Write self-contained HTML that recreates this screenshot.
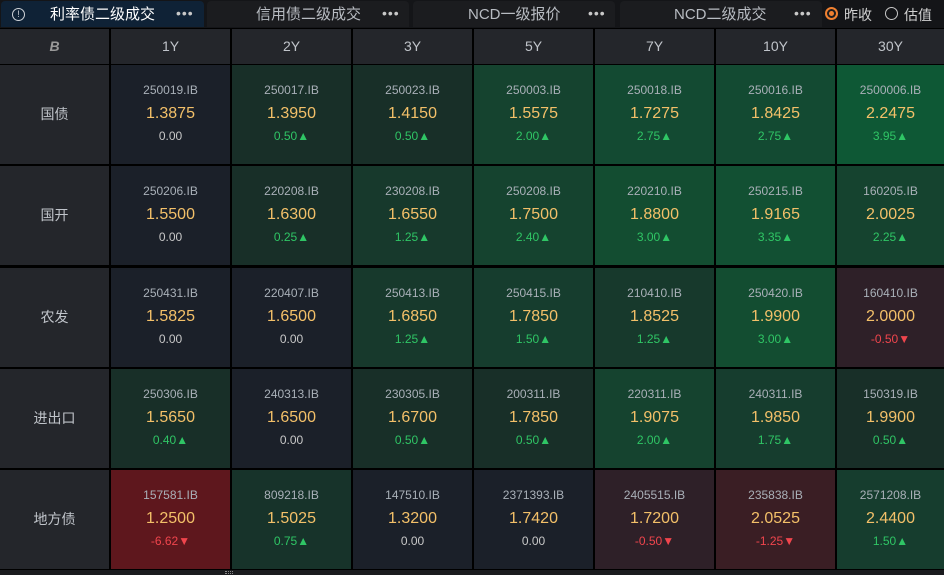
<!DOCTYPE html>
<html><head><meta charset="utf-8"><style>
*{margin:0;padding:0;box-sizing:border-box}
body{width:944px;height:575px;background:#000;position:relative;overflow:hidden;font-family:"Liberation Sans","Noto Sans CJK SC",sans-serif}
.top{position:absolute;left:0;top:0;width:944px;height:28px;background:#141518}
.tab{position:absolute;top:1px;height:26px;background:#1b1c1f;border-radius:4px 4px 0 0;color:#b8bcc2;font-size:15px;line-height:28px}
.tab .t{position:absolute;top:0}
.tab .d{position:absolute;top:-2px;font-size:14px;letter-spacing:1px;color:#c8c8c8}
.c{position:absolute;background:#1b2029;text-align:center}
.h{position:absolute;background:#24262b;color:#c0c4ca;font-size:14px;text-align:center;line-height:35px;top:29px;height:35px}
.rl{position:absolute;left:0;width:109px;height:99px;background:#24262b;color:#c0c4ca;font-size:14px;text-align:center;line-height:99px}
.c .a{position:absolute;left:0;right:0;top:18px;font-size:12px;color:#a9b0b8}
.c .p{position:absolute;left:0;right:0;top:40px;font-size:16px;color:#f3c069}
.c .g{position:absolute;left:0;right:0;top:64px;font-size:12px;color:#2fc565}
.c .r{color:#f0454d}
.c .z{color:#c8c8c8}
</style></head><body>
<div class="top"></div>
<div class="tab" style="left:1px;width:203px;background:#0f2236;color:#fff">
<span class="t" style="left:11px;top:7px;width:13px;height:13px;border:1.3px solid #cfd3d8;border-radius:50%;font-size:9px;line-height:10px;text-align:center;color:#cfd3d8">!</span>
<span class="t" style="left:49px">利率债二级成交</span><span class="d" style="left:175px">•••</span></div>
<div class="tab" style="left:207px;width:202px"><span class="t" style="left:49px">信用债二级成交</span><span class="d" style="left:175px">•••</span></div>
<div class="tab" style="left:413px;width:202px"><span class="t" style="left:55px">NCD一级报价</span><span class="d" style="left:175px">•••</span></div>
<div class="tab" style="left:620px;width:202px"><span class="t" style="left:54px">NCD二级成交</span><span class="d" style="left:174px">•••</span></div>
<div style="position:absolute;left:825px;top:7px;width:13px;height:13px;border-radius:50%;border:2px solid #f08030;background:#1b1c1f"><div style="position:absolute;left:2px;top:2px;width:5px;height:5px;border-radius:50%;background:#f08030"></div></div>
<div style="position:absolute;left:844px;top:5px;color:#d0d0d0;font-size:14px">昨收</div>
<div style="position:absolute;left:885px;top:7px;width:13px;height:13px;border-radius:50%;border:1.5px solid #c8c8c8"></div>
<div style="position:absolute;left:904px;top:5px;color:#d0d0d0;font-size:14px">估值</div>

<div class="h" style="left:0;width:109px;font-weight:bold;font-style:italic;color:#999">B</div>
<div class="h" style="left:111px;width:119px">1Y</div>
<div class="h" style="left:232px;width:119px">2Y</div>
<div class="h" style="left:353px;width:119px">3Y</div>
<div class="h" style="left:474px;width:119px">5Y</div>
<div class="h" style="left:595px;width:119px">7Y</div>
<div class="h" style="left:716px;width:119px">10Y</div>
<div class="h" style="left:837px;width:107px">30Y</div>

<div class="rl" style="top:65px">国债</div>
<div class="rl" style="top:166px">国开</div>
<div class="rl" style="top:268px">农发</div>
<div class="rl" style="top:369px">进出口</div>
<div class="rl" style="top:470px">地方债</div>

<div class="c" style="left:111px;top:65px;width:119px;height:99px"><div class="a">250019.IB</div><div class="p">1.3875</div><div class="g z">0.00</div></div>
<div class="c" style="left:232px;top:65px;width:119px;height:99px;background:#182f28"><div class="a">250017.IB</div><div class="p">1.3950</div><div class="g">0.50▲</div></div>
<div class="c" style="left:353px;top:65px;width:119px;height:99px;background:#182f28"><div class="a">250023.IB</div><div class="p">1.4150</div><div class="g">0.50▲</div></div>
<div class="c" style="left:474px;top:65px;width:119px;height:99px;background:#15432f"><div class="a">250003.IB</div><div class="p">1.5575</div><div class="g">2.00▲</div></div>
<div class="c" style="left:595px;top:65px;width:119px;height:99px;background:#134a32"><div class="a">250018.IB</div><div class="p">1.7275</div><div class="g">2.75▲</div></div>
<div class="c" style="left:716px;top:65px;width:119px;height:99px;background:#134a32"><div class="a">250016.IB</div><div class="p">1.8425</div><div class="g">2.75▲</div></div>
<div class="c" style="left:837px;top:65px;width:107px;height:99px;background:#0e5835"><div class="a">2500006.IB</div><div class="p">2.2475</div><div class="g">3.95▲</div></div>

<div class="c" style="left:111px;top:166px;width:119px;height:99px"><div class="a">250206.IB</div><div class="p">1.5500</div><div class="g z">0.00</div></div>
<div class="c" style="left:232px;top:166px;width:119px;height:99px;background:#182f28"><div class="a">220208.IB</div><div class="p">1.6300</div><div class="g">0.25▲</div></div>
<div class="c" style="left:353px;top:166px;width:119px;height:99px;background:#17392c"><div class="a">230208.IB</div><div class="p">1.6550</div><div class="g">1.25▲</div></div>
<div class="c" style="left:474px;top:166px;width:119px;height:99px;background:#15432f"><div class="a">250208.IB</div><div class="p">1.7500</div><div class="g">2.40▲</div></div>
<div class="c" style="left:595px;top:166px;width:119px;height:99px;background:#134d31"><div class="a">220210.IB</div><div class="p">1.8800</div><div class="g">3.00▲</div></div>
<div class="c" style="left:716px;top:166px;width:119px;height:99px;background:#125033"><div class="a">250215.IB</div><div class="p">1.9165</div><div class="g">3.35▲</div></div>
<div class="c" style="left:837px;top:166px;width:107px;height:99px;background:#15432f"><div class="a">160205.IB</div><div class="p">2.0025</div><div class="g">2.25▲</div></div>

<div class="c" style="left:111px;top:268px;width:119px;height:99px"><div class="a">250431.IB</div><div class="p">1.5825</div><div class="g z">0.00</div></div>
<div class="c" style="left:232px;top:268px;width:119px;height:99px"><div class="a">220407.IB</div><div class="p">1.6500</div><div class="g z">0.00</div></div>
<div class="c" style="left:353px;top:268px;width:119px;height:99px;background:#17392c"><div class="a">250413.IB</div><div class="p">1.6850</div><div class="g">1.25▲</div></div>
<div class="c" style="left:474px;top:268px;width:119px;height:99px;background:#163d2e"><div class="a">250415.IB</div><div class="p">1.7850</div><div class="g">1.50▲</div></div>
<div class="c" style="left:595px;top:268px;width:119px;height:99px;background:#17392c"><div class="a">210410.IB</div><div class="p">1.8525</div><div class="g">1.25▲</div></div>
<div class="c" style="left:716px;top:268px;width:119px;height:99px;background:#134d31"><div class="a">250420.IB</div><div class="p">1.9900</div><div class="g">3.00▲</div></div>
<div class="c" style="left:837px;top:268px;width:107px;height:99px;background:#2e2028"><div class="a">160410.IB</div><div class="p">2.0000</div><div class="g r">-0.50▼</div></div>

<div class="c" style="left:111px;top:369px;width:119px;height:99px;background:#182f28"><div class="a">250306.IB</div><div class="p">1.5650</div><div class="g">0.40▲</div></div>
<div class="c" style="left:232px;top:369px;width:119px;height:99px"><div class="a">240313.IB</div><div class="p">1.6500</div><div class="g z">0.00</div></div>
<div class="c" style="left:353px;top:369px;width:119px;height:99px;background:#182f28"><div class="a">230305.IB</div><div class="p">1.6700</div><div class="g">0.50▲</div></div>
<div class="c" style="left:474px;top:369px;width:119px;height:99px;background:#182f28"><div class="a">200311.IB</div><div class="p">1.7850</div><div class="g">0.50▲</div></div>
<div class="c" style="left:595px;top:369px;width:119px;height:99px;background:#15432f"><div class="a">220311.IB</div><div class="p">1.9075</div><div class="g">2.00▲</div></div>
<div class="c" style="left:716px;top:369px;width:119px;height:99px;background:#163d2e"><div class="a">240311.IB</div><div class="p">1.9850</div><div class="g">1.75▲</div></div>
<div class="c" style="left:837px;top:369px;width:107px;height:99px;background:#182f28"><div class="a">150319.IB</div><div class="p">1.9900</div><div class="g">0.50▲</div></div>

<div class="c" style="left:111px;top:470px;width:119px;height:99px;background:#5e171d"><div class="a">157581.IB</div><div class="p">1.2500</div><div class="g r">-6.62▼</div></div>
<div class="c" style="left:232px;top:470px;width:119px;height:99px;background:#17332a"><div class="a">809218.IB</div><div class="p">1.5025</div><div class="g">0.75▲</div></div>
<div class="c" style="left:353px;top:470px;width:119px;height:99px"><div class="a">147510.IB</div><div class="p">1.3200</div><div class="g z">0.00</div></div>
<div class="c" style="left:474px;top:470px;width:119px;height:99px"><div class="a">2371393.IB</div><div class="p">1.7420</div><div class="g z">0.00</div></div>
<div class="c" style="left:595px;top:470px;width:119px;height:99px;background:#2e2028"><div class="a">2405515.IB</div><div class="p">1.7200</div><div class="g r">-0.50▼</div></div>
<div class="c" style="left:716px;top:470px;width:119px;height:99px;background:#3a1e24"><div class="a">235838.IB</div><div class="p">2.0525</div><div class="g r">-1.25▼</div></div>
<div class="c" style="left:837px;top:470px;width:107px;height:99px;background:#163d2e"><div class="a">2571208.IB</div><div class="p">2.4400</div><div class="g">1.50▲</div></div>
<div style="position:absolute;left:0;top:570px;width:944px;height:5px;background:#1a1b1e"></div>
<div style="position:absolute;left:225px;top:571px;width:8px;height:3px;border-top:1px dotted #888;border-bottom:1px dotted #888"></div>
</body></html>
